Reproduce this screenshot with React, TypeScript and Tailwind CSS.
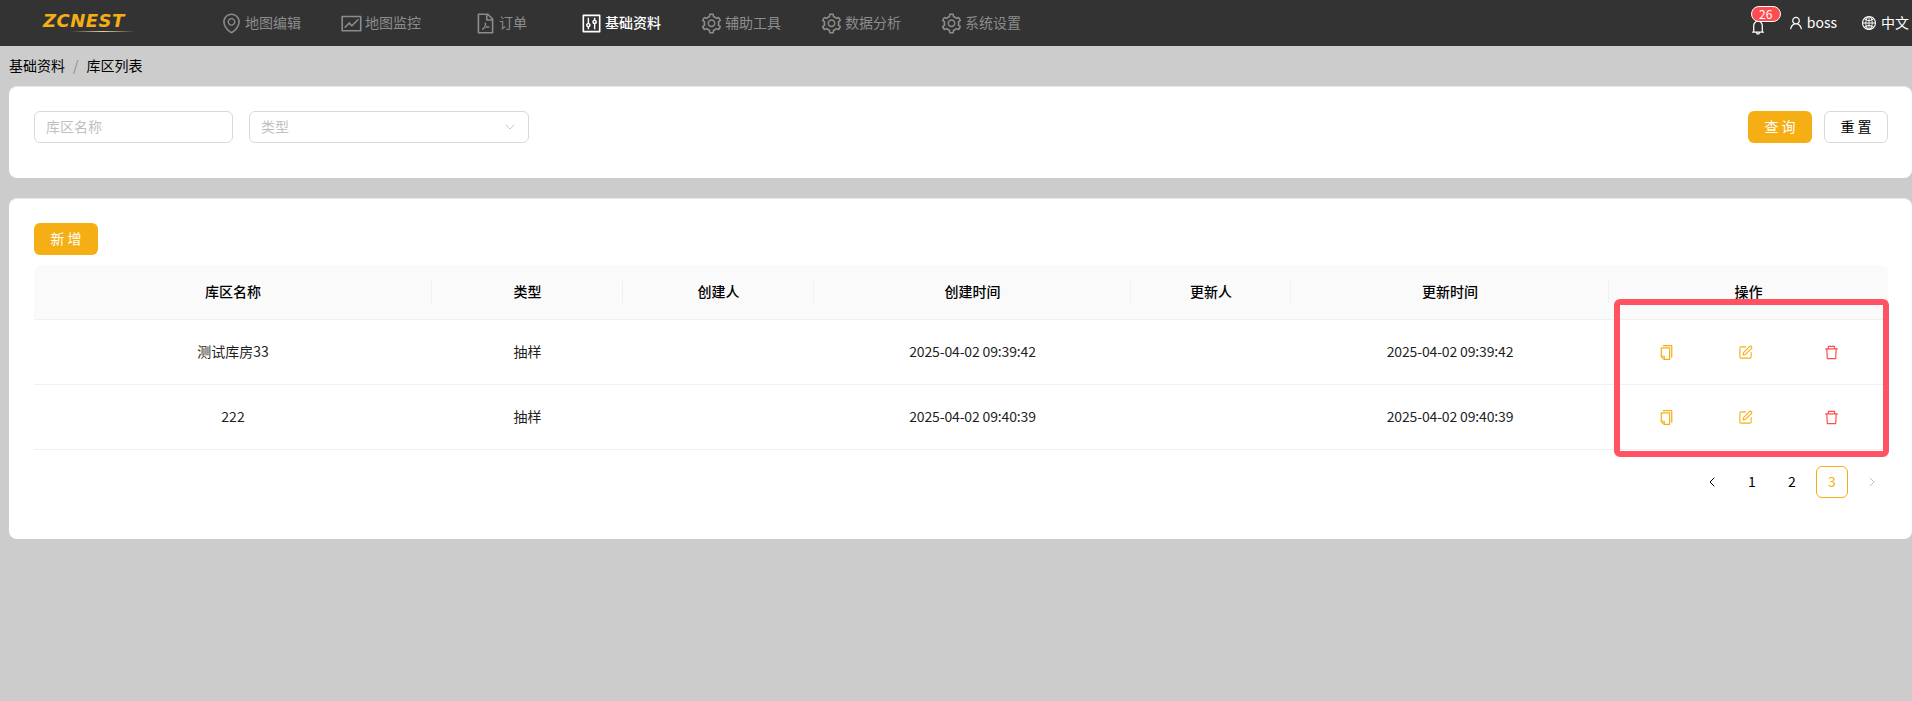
import React from 'react';
import {
  AiOutlineEnvironment,
  AiOutlineFund,
  AiOutlineFilePdf,
  AiOutlineControl,
  AiOutlineSetting,
  AiOutlineBell,
  AiOutlineUser,
  AiOutlineGlobal,
  AiOutlineCopy,
  AiOutlineDelete,
} from 'react-icons/ai';
import { ChevronDown, ChevronLeft, ChevronRight, SquarePen } from 'lucide-react';

const FONT = "font-['Noto_Sans_CJK_SC','Noto_Sans',sans-serif]";

const navItems = [
  { label: '地图编辑', icon: AiOutlineEnvironment },
  { label: '地图监控', icon: AiOutlineFund },
  { label: '订单', icon: AiOutlineFilePdf },
  { label: '基础资料', icon: AiOutlineControl, active: true },
  { label: '辅助工具', icon: AiOutlineSetting },
  { label: '数据分析', icon: AiOutlineSetting },
  { label: '系统设置', icon: AiOutlineSetting },
];

const columns = ['库区名称', '类型', '创建人', '创建时间', '更新人', '更新时间', '操作'];
const GRID = 'grid grid-cols-[398px_191px_191px_317px_160px_318px_279px]';

const rows = [
  { name: '测试库房33', type: '抽样', created: '2025-04-02 09:39:42', updated: '2025-04-02 09:39:42' },
  { name: '222', type: '抽样', created: '2025-04-02 09:40:39', updated: '2025-04-02 09:40:39' },
];

const App: React.FC = () => {
  return (
    <div className={`min-h-screen bg-[#cccccc] text-sm text-black ${FONT}`}>
      {/* Top bar */}
      <header className="flex h-[46px] items-center bg-[#333333]">
        <div className="relative ml-[43px] h-[46px] w-[178px] shrink-0">
          <span className="absolute left-0 top-[10px] font-['DejaVu_Sans',sans-serif] text-[18px] font-bold italic leading-[22px] tracking-[0.5px] text-[#f5ae14]">
            ZCNEST
          </span>
          <div className="absolute left-[28px] top-[31px] h-px w-[64px] bg-gradient-to-r from-transparent via-[#e8d4a0] to-transparent" />
        </div>
        <nav className="flex">
          {navItems.map(item => {
            const Icon = item.icon;
            return (
              <div key={item.label} className="mr-[40px] flex w-[80px] items-center justify-center gap-1">
                <Icon className={`m-[-1.5px] h-[23px] w-[23px] ${item.active ? 'text-white' : 'text-[#8c8c8c]'}`} />
                <span className={`pb-0.5 ${item.active ? 'font-medium text-white' : 'text-[#8c8c8c]'}`}>{item.label}</span>
              </div>
            );
          })}
        </nav>
        <div className="ml-auto flex items-center text-white">
          <div className="relative mr-[22px] flex w-4 justify-center">
            <AiOutlineBell className="mt-2 h-[18px] w-[18px] shrink-0" />
            <span className="absolute left-[1px] top-[-4px] flex h-4 w-[30px] items-center justify-center rounded-full border border-white bg-[#ff4d4f] text-xs leading-none">
              26
            </span>
          </div>
          <AiOutlineUser className="mr-[3px] h-4 w-4" />
          <span className="mr-6 pb-0.5">boss</span>
          <AiOutlineGlobal className="mr-1 h-4 w-4" />
          <span className="mr-[3px] pb-0.5">中文</span>
        </div>
      </header>

      {/* Breadcrumb */}
      <div className="flex h-[40px] items-center pb-[3px] pl-[9px]">
        <span>基础资料</span>
        <span className="mx-2 text-[#8c8c8c]">/</span>
        <span>库区列表</span>
      </div>

      <main className="ml-[9px] flex flex-col gap-5">
        {/* Filters */}
        <section className="flex h-[92px] items-start justify-between rounded-lg border-t border-[#e8e8e8] bg-white pl-[25px] pr-6 pt-6">
          <div className="flex gap-4">
            <input
              placeholder="库区名称"
              className="h-8 w-[199px] rounded-md border border-[#d9d9d9] px-[11px] pb-0.5 text-sm outline-none placeholder:text-[#bfbfbf]"
            />
            <div className="flex h-8 w-[280px] items-center justify-between rounded-md border border-[#d9d9d9] px-[10px] text-[#bfbfbf]">
              <span className="pb-0.5 pl-px">类型</span>
              <ChevronDown className="h-4 w-4" strokeWidth={1.25} />
            </div>
          </div>
          <div className="flex gap-3">
            <button className="h-8 w-16 rounded-md bg-[#f5ae14] pb-0.5 text-white">查 询</button>
            <button className="h-8 w-16 rounded-md border border-[#d9d9d9] bg-white pb-0.5">重 置</button>
          </div>
        </section>

        {/* Table */}
        <section className="h-[341px] rounded-lg border-t border-[#e8e8e8] bg-white pl-[25px] pr-6 pt-6">
          <button className="block h-8 w-16 rounded-md bg-[#f5ae14] pb-0.5 text-white">新 增</button>
          <div className="relative mt-[10px]">
            <div className={`${GRID} h-[55px] rounded-t-lg border-b border-[#f0f0f0] bg-[#fafafa] font-medium`}>
              {columns.map((col, i) => (
                <div key={col} className="relative flex items-center justify-center pb-0.5">
                  {col}
                  {i < columns.length - 1 && (
                    <span className="absolute right-0 top-1/2 h-[22px] w-px -translate-y-1/2 bg-[#f0f0f0]" />
                  )}
                </div>
              ))}
            </div>
            {rows.map(row => (
              <div key={row.name} className={`${GRID} h-[65px] border-b border-[#f0f0f0] text-[#1f1f1f]`}>
                <div className="flex items-center justify-center pb-0.5">{row.name}</div>
                <div className="flex items-center justify-center pb-0.5">{row.type}</div>
                <div />
                <div className="flex items-center justify-center pb-0.5 tracking-[-0.15px]">{row.created}</div>
                <div />
                <div className="flex items-center justify-center pb-0.5 tracking-[-0.15px]">{row.updated}</div>
                <div className="flex items-center pl-[49px]">
                  <AiOutlineCopy className="h-[17px] w-[17px] text-[#f5ae14]" />
                  <SquarePen className="ml-[63px] h-[15px] w-[15px] text-[#f5ae14]" strokeWidth={1.75} />
                  <AiOutlineDelete className="ml-[70px] h-[17px] w-[17px] text-[#ff4d4f]" />
                </div>
              </div>
            ))}
            {/* Highlight drawn over the action column */}
            <div className="pointer-events-none absolute left-[1580px] top-[34px] h-[158px] w-[275px] rounded-[6px] border-[6px] border-[#ff5364]" />
          </div>

          {/* Pagination */}
          <div className="mt-4 flex justify-end gap-2">
            <div className="flex h-8 w-8 items-center justify-center">
              <ChevronLeft className="h-4 w-4" strokeWidth={1.5} />
            </div>
            <div className="flex h-8 w-8 items-center justify-center pb-0.5">1</div>
            <div className="flex h-8 w-8 items-center justify-center pb-0.5">2</div>
            <div className="flex h-8 w-8 items-center justify-center rounded-md border border-[#f5ae14] pb-0.5 text-[#f5ae14]">3</div>
            <div className="flex h-8 w-8 items-center justify-center text-[#bfbfbf]">
              <ChevronRight className="h-4 w-4" strokeWidth={1.5} />
            </div>
          </div>
        </section>
      </main>
    </div>
  );
};

export default App;
